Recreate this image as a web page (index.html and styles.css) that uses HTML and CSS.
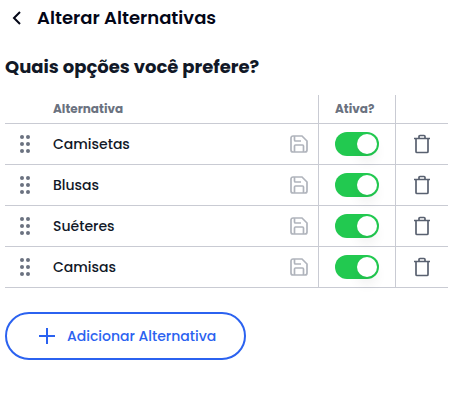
FILE: index.html
```html
<!DOCTYPE html>
<html lang="pt-BR">
<head>
<meta charset="UTF-8">
<meta name="viewport" content="width=device-width, initial-scale=1.0">
<title>Alterar Alternativas</title>
<link rel="stylesheet" href="styles.css">
</head>
<body>
<!-- Shared icons -->
<svg class="sprite" aria-hidden="true">
  <symbol id="icon-drag" viewBox="0 0 10 18">
    <circle cx="2" cy="2" r="2"/><circle cx="8" cy="2" r="2"/>
    <circle cx="2" cy="9" r="2"/><circle cx="8" cy="9" r="2"/>
    <circle cx="2" cy="16" r="2"/><circle cx="8" cy="16" r="2"/>
  </symbol>
  <symbol id="icon-save" viewBox="0 0 18 18">
    <path d="M12 1H3a2 2 0 0 0-2 2v12a2 2 0 0 0 2 2h12a2 2 0 0 0 2-2V6z"/>
    <path d="M4.500 17v-6a1 1 0 0 1 1-1h7a1 1 0 0 1 1 1v6M4.500 1v4a1 1 0 0 0 1 1H11"/>
  </symbol>
  <symbol id="icon-trash" viewBox="0 0 18 20">
    <path d="M1 4.500h16M3 4.500v13a1 1 0 0 0 1 1h10a1 1 0 0 0 1-1v-13M6 4.500V2.500a1 1 0 0 1 1-1h4a1 1 0 0 1 1 1v2"/>
  </symbol>
</svg>

<header class="page-header">
  <button type="button" class="icon-button back" aria-label="Voltar">
    <svg width="10" height="16" viewBox="0 0 10 16"><path d="M8 2L2 8l6 6"/></svg>
  </button>
  <h1>Alterar Alternativas</h1>
</header>

<main>
  <h2>Quais opções você prefere?</h2>
  <table class="options">
    <thead>
      <tr>
        <th class="col-drag"></th>
        <th class="col-name">Alternativa</th>
        <th class="col-save"></th>
        <th class="col-active">Ativa?</th>
        <th class="col-delete"></th>
      </tr>
    </thead>
    <tbody>
      <tr>
        <td class="col-drag"><button type="button" class="icon-button drag" aria-label="Mover Camisetas"><svg width="10" height="18"><use href="#icon-drag"/></svg></button></td>
        <td class="col-name">Camisetas</td>
        <td class="col-save"><button type="button" class="icon-button save" aria-label="Salvar Camisetas"><svg width="18" height="18"><use href="#icon-save"/></svg></button></td>
        <td class="col-active"><input type="checkbox" class="switch" aria-label="Camisetas ativa" checked></td>
        <td class="col-delete"><button type="button" class="icon-button trash" aria-label="Excluir Camisetas"><svg width="18" height="20"><use href="#icon-trash"/></svg></button></td>
      </tr>
      <tr>
        <td class="col-drag"><button type="button" class="icon-button drag" aria-label="Mover Blusas"><svg width="10" height="18"><use href="#icon-drag"/></svg></button></td>
        <td class="col-name">Blusas</td>
        <td class="col-save"><button type="button" class="icon-button save" aria-label="Salvar Blusas"><svg width="18" height="18"><use href="#icon-save"/></svg></button></td>
        <td class="col-active"><input type="checkbox" class="switch" aria-label="Blusas ativa" checked></td>
        <td class="col-delete"><button type="button" class="icon-button trash" aria-label="Excluir Blusas"><svg width="18" height="20"><use href="#icon-trash"/></svg></button></td>
      </tr>
      <tr>
        <td class="col-drag"><button type="button" class="icon-button drag" aria-label="Mover Suéteres"><svg width="10" height="18"><use href="#icon-drag"/></svg></button></td>
        <td class="col-name">Suéteres</td>
        <td class="col-save"><button type="button" class="icon-button save" aria-label="Salvar Suéteres"><svg width="18" height="18"><use href="#icon-save"/></svg></button></td>
        <td class="col-active"><input type="checkbox" class="switch" aria-label="Suéteres ativa" checked></td>
        <td class="col-delete"><button type="button" class="icon-button trash" aria-label="Excluir Suéteres"><svg width="18" height="20"><use href="#icon-trash"/></svg></button></td>
      </tr>
      <tr>
        <td class="col-drag"><button type="button" class="icon-button drag" aria-label="Mover Camisas"><svg width="10" height="18"><use href="#icon-drag"/></svg></button></td>
        <td class="col-name">Camisas</td>
        <td class="col-save"><button type="button" class="icon-button save" aria-label="Salvar Camisas"><svg width="18" height="18"><use href="#icon-save"/></svg></button></td>
        <td class="col-active"><input type="checkbox" class="switch" aria-label="Camisas ativa" checked></td>
        <td class="col-delete"><button type="button" class="icon-button trash" aria-label="Excluir Camisas"><svg width="18" height="20"><use href="#icon-trash"/></svg></button></td>
      </tr>
    </tbody>
  </table>
  <button type="button" class="add-button">
    <svg width="16" height="16" viewBox="0 0 16 16"><path d="M8 0v16M0 8h16"/></svg>
    Adicionar Alternativa
  </button>
</main>
</body>
</html>
```

FILE: styles.css
```css
* {
  box-sizing: border-box;
}

body {
  margin: 0;
  padding: 4px 6px 16px 5px;
  font-family: Poppins, Inter, sans-serif;
  font-size: 14px;
  color: #111827;
  background-color: #ffffff;
}

.sprite {
  display: none;
}

.page-header {
  display: flex;
  align-items: center;
  gap: 8px;
}

h1 {
  margin: 0;
  font-size: 18px;
  font-weight: 600;
  line-height: 28px;
  color: #030617;
}

h2 {
  margin: 21px 0 14px;
  font-size: 18px;
  font-weight: 700;
  line-height: 28px;
}

.icon-button {
  display: flex;
  align-items: center;
  justify-content: center;
  padding: 0;
  border: none;
  background: none;
  cursor: pointer;
  fill: none;
  stroke: currentColor;
}

.back {
  width: 24px;
  height: 24px;
  color: #030617;
  stroke-width: 2;
}

.drag {
  margin: 0 auto;
  color: #6b7280;
  fill: currentColor;
  stroke: none;
  cursor: grab;
}

.save {
  margin: 0 auto;
  color: #b0b4bc;
  stroke-width: 1.7;
}

.trash {
  margin: 0 auto;
  color: #596170;
  stroke-width: 1.7;
}

.options {
  width: 100%;
  table-layout: fixed;
  border-spacing: 0;
}

.options th,
.options td {
  height: 41px;
  padding: 0;
  border-bottom: 1px solid #c9cbd3;
  text-align: center;
  vertical-align: middle;
}

.options th {
  height: 29px;
  font-size: 12px;
  font-weight: 700;
  line-height: 16px;
  color: #6b7280;
}

.options .col-drag {
  width: 40px;
}

.options .col-name {
  padding-left: 8px;
  text-align: left;
}

.options td.col-name {
  font-weight: 500;
}

.options .col-save {
  width: 38px;
}

.options .col-active {
  width: 78px;
  padding: 0 16px;
  border-left: 1px solid #c9cbd3;
  border-right: 1px solid #c9cbd3;
  text-align: left;
}

.options .col-delete {
  width: 52px;
}

.switch {
  appearance: none;
  display: block;
  width: 44px;
  height: 24px;
  margin: 0;
  padding: 2px;
  border-radius: 12px;
  background-color: #d1d5db;
  cursor: pointer;
}

.switch::before {
  content: "";
  display: block;
  width: 20px;
  height: 20px;
  border-radius: 50%;
  background-color: #ffffff;
  box-shadow: 0 8px 12px rgba(0, 0, 0, 0.06);
}

.switch:checked {
  background-color: #22c950;
}

.switch:checked::before {
  margin-left: auto;
}

.add-button {
  display: inline-flex;
  align-items: center;
  gap: 12px;
  height: 48px;
  margin-top: 24px;
  padding: 0 28px 0 32px;
  border: 2px solid #2b62f0;
  border-radius: 24px;
  background: none;
  font-family: inherit;
  font-size: 14px;
  font-weight: 500;
  color: #2b62f0;
  cursor: pointer;
}

.add-button svg {
  fill: none;
  stroke: currentColor;
  stroke-width: 2;
}
```
